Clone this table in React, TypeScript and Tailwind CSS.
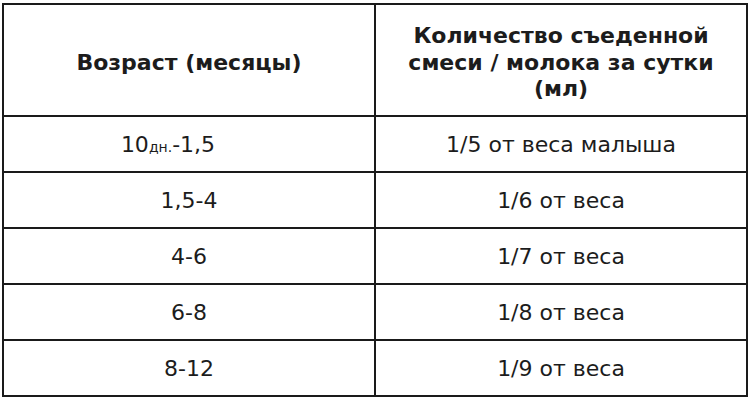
import React from "react";

const rows: { age: React.ReactNode; amount: string }[] = [
  {
    age: (
      <span className="mr-[42px]">
        10<span className="text-[14px]">дн.</span>-1,5
      </span>
    ),
    amount: "1/5 от веса малыша",
  },
  { age: "1,5-4", amount: "1/6 от веса" },
  { age: "4-6", amount: "1/7 от веса" },
  { age: "6-8", amount: "1/8 от веса" },
  { age: "8-12", amount: "1/9 от веса" },
];

export default function App() {
  return (
    <div
      className="w-[750px] h-[402px] bg-white pt-[3px] pl-[2px] text-[#1c1c1c]"
      style={{ fontFamily: '"DejaVu Sans", Verdana, sans-serif' }}
    >
      <table className="w-[746px] border-collapse border-2 border-[#1a1a1a] table-fixed">
        <thead>
          <tr className="h-[112px]">
            <th className="w-1/2 border-2 border-[#1a1a1a] text-[22px] font-bold text-center align-middle pt-[4px]">
              Возраст (месяцы)
            </th>
            <th className="w-1/2 border-2 border-[#1a1a1a] text-[22px] font-bold text-center align-middle leading-[26.5px] px-2 pt-[6px]">
              Количество съеденной
              <br />
              смеси / молока за сутки
              <br />
              (мл)
            </th>
          </tr>
        </thead>
        <tbody>
          {rows.map((r, i) => (
            <tr key={i} className="h-[56px]">
              <td className="border-2 border-[#1a1a1a] text-[22px] text-center align-middle">
                {r.age}
              </td>
              <td className="border-2 border-[#1a1a1a] text-[22px] text-center align-middle">
                {r.amount}
              </td>
            </tr>
          ))}
        </tbody>
      </table>
    </div>
  );
}
